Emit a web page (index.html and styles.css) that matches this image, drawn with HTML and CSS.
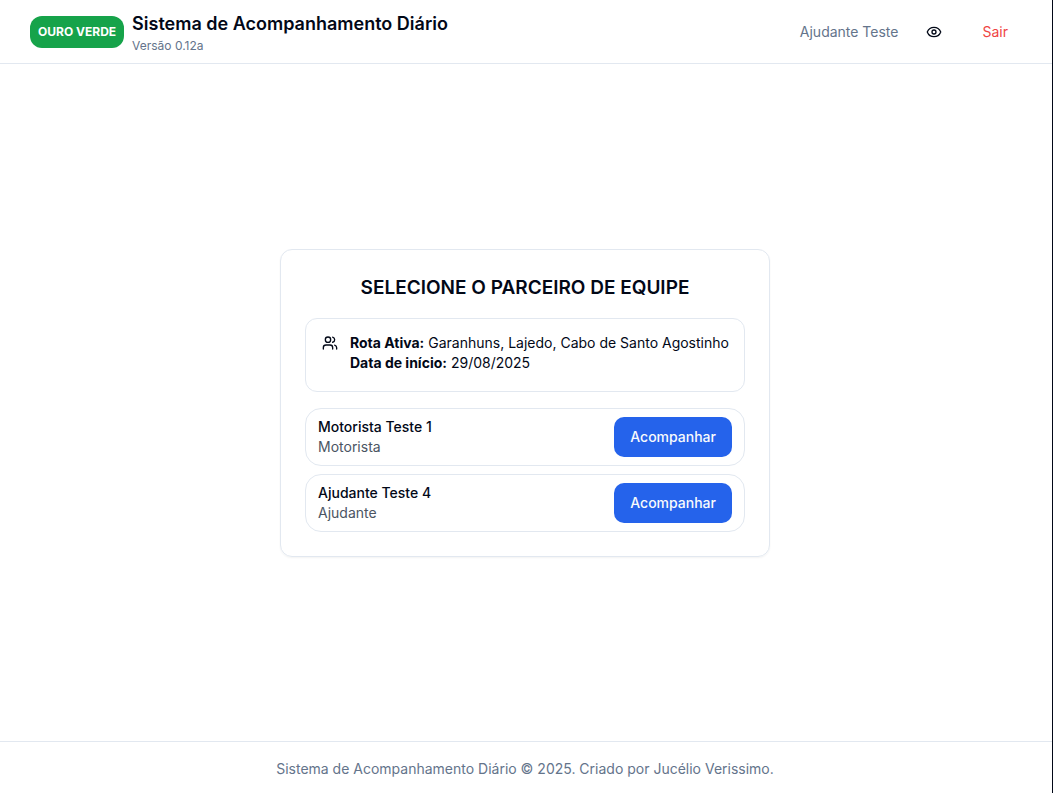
FILE: index.html
```html
<!DOCTYPE html>
<html lang="pt-BR">
<head>
  <meta charset="utf-8">
  <meta name="viewport" content="width=device-width, initial-scale=1">
  <title>Sistema de Acompanhamento Diário</title>
  <link rel="stylesheet" href="styles.css">
</head>
<body class="page">
  <header class="header">
    <div class="brand">
      <span class="brand-badge">OURO VERDE</span>
      <div>
        <h1 class="brand-title">Sistema de Acompanhamento Diário</h1>
        <p class="brand-version">Versão 0.12a</p>
      </div>
    </div>
    <div class="header-actions">
      <span class="user-name">Ajudante Teste</span>
      <button class="icon-button" type="button" aria-label="Visualizar">
        <svg class="icon" viewBox="0 0 24 24" aria-hidden="true">
          <path d="M2.062 12.348a1 1 0 0 1 0-.696 10.75 10.75 0 0 1 19.876 0 1 1 0 0 1 0 .696 10.75 10.75 0 0 1-19.876 0"/>
          <circle cx="12" cy="12" r="3"/>
        </svg>
      </button>
      <button class="logout" type="button">Sair</button>
    </div>
  </header>

  <main class="main">
    <section class="card">
      <h2 class="card-title">SELECIONE O PARCEIRO DE EQUIPE</h2>
      <div class="route">
        <svg class="icon route-icon" viewBox="0 0 24 24" aria-hidden="true">
          <path d="M16 21v-2a4 4 0 0 0-4-4H6a4 4 0 0 0-4 4v2"/>
          <circle cx="9" cy="7" r="4"/>
          <path d="M22 21v-2a4 4 0 0 0-3-3.87"/>
          <path d="M16 3.13a4 4 0 0 1 0 7.75"/>
        </svg>
        <div class="route-text">
          <p><strong>Rota Ativa:</strong> Garanhuns, Lajedo, Cabo de Santo Agostinho</p>
          <p><strong>Data de início:</strong> 29/08/2025</p>
        </div>
      </div>
      <ul class="partners">
        <li class="partner">
          <div>
            <p class="partner-name">Motorista Teste 1</p>
            <p class="partner-role">Motorista</p>
          </div>
          <button class="follow" type="button">Acompanhar</button>
        </li>
        <li class="partner">
          <div>
            <p class="partner-name">Ajudante Teste 4</p>
            <p class="partner-role">Ajudante</p>
          </div>
          <button class="follow" type="button">Acompanhar</button>
        </li>
      </ul>
    </section>
  </main>

  <footer class="footer">Sistema de Acompanhamento Diário © 2025. Criado por Jucélio Verissimo.</footer>
</body>
</html>
```

FILE: styles.css
```css
*,
*::before,
*::after {
  box-sizing: border-box;
  margin: 0;
  padding: 0;
}

.page {
  display: flex;
  flex-direction: column;
  min-height: 100vh;
  border-right: 1px solid #020817;
  background: #fff;
  color: #020817;
  font-family: Inter, "Liberation Sans", sans-serif;
  font-size: 14px;
  line-height: 20px;
}

button {
  border: 0;
  background: none;
  font: inherit;
  cursor: pointer;
}

.header {
  display: flex;
  align-items: center;
  justify-content: space-between;
  min-height: 64px;
  padding: 0 28px 0 30px;
  border-bottom: 1px solid #e2e8f0;
}

.brand {
  display: flex;
  align-items: center;
  gap: 8px;
}

.brand-badge {
  padding: 8px;
  border-radius: 12px;
  background: #16a34a;
  color: #fff;
  font-size: 12px;
  font-weight: 700;
  line-height: 16px;
  white-space: nowrap;
}

.brand-title {
  font-size: 18px;
  font-weight: 600;
  line-height: 28px;
}

.brand-version {
  color: #64748b;
  font-size: 12px;
  line-height: 16px;
}

.header-actions {
  display: flex;
  align-items: center;
  gap: 16px;
}

.user-name {
  color: #64748b;
}

.icon {
  flex: none;
  width: 16px;
  height: 16px;
  fill: none;
  stroke: currentColor;
  stroke-width: 2;
  stroke-linecap: round;
  stroke-linejoin: round;
}

.icon-button {
  display: flex;
  align-items: center;
  justify-content: center;
  width: 40px;
  height: 40px;
  color: #020817;
}

.logout {
  padding: 8px 16px 8px 12px;
  border-radius: 10px;
  color: #ef4444;
}

.main {
  display: flex;
  flex: 1;
  align-items: center;
  justify-content: center;
  padding: 16px 18px 16px 16px;
}

.card {
  display: flex;
  flex-direction: column;
  gap: 16px;
  width: 100%;
  max-width: 490px;
  padding: 24px;
  border: 1px solid #e2e8f0;
  border-radius: 12px;
  box-shadow: 0 1px 2px rgba(0, 0, 0, 0.05);
}

.card-title {
  font-size: 19px;
  font-weight: 600;
  line-height: 28px;
  text-align: center;
}

.route {
  display: flex;
  gap: 12px;
  min-height: 74px;
  padding: 14px 14px 14px 16px;
  border: 1px solid #e2e8f0;
  border-radius: 12px;
}

.route-icon {
  margin-top: 2px;
}

.partners {
  display: grid;
  gap: 8px;
  list-style: none;
}

.partner {
  display: flex;
  align-items: center;
  justify-content: space-between;
  padding: 8px 12px;
  border: 1px solid #e2e8f0;
  border-radius: 16px;
}

.partner-name {
  font-weight: 500;
}

.partner-role {
  color: #4b5563;
}

.follow {
  padding: 10px 16px;
  border-radius: 10px;
  background: #2563eb;
  color: #f8fafc;
  font-weight: 500;
}

.footer {
  padding: 17px 18px 14px 16px;
  border-top: 1px solid #e2e8f0;
  color: #64748b;
  text-align: center;
}
```
